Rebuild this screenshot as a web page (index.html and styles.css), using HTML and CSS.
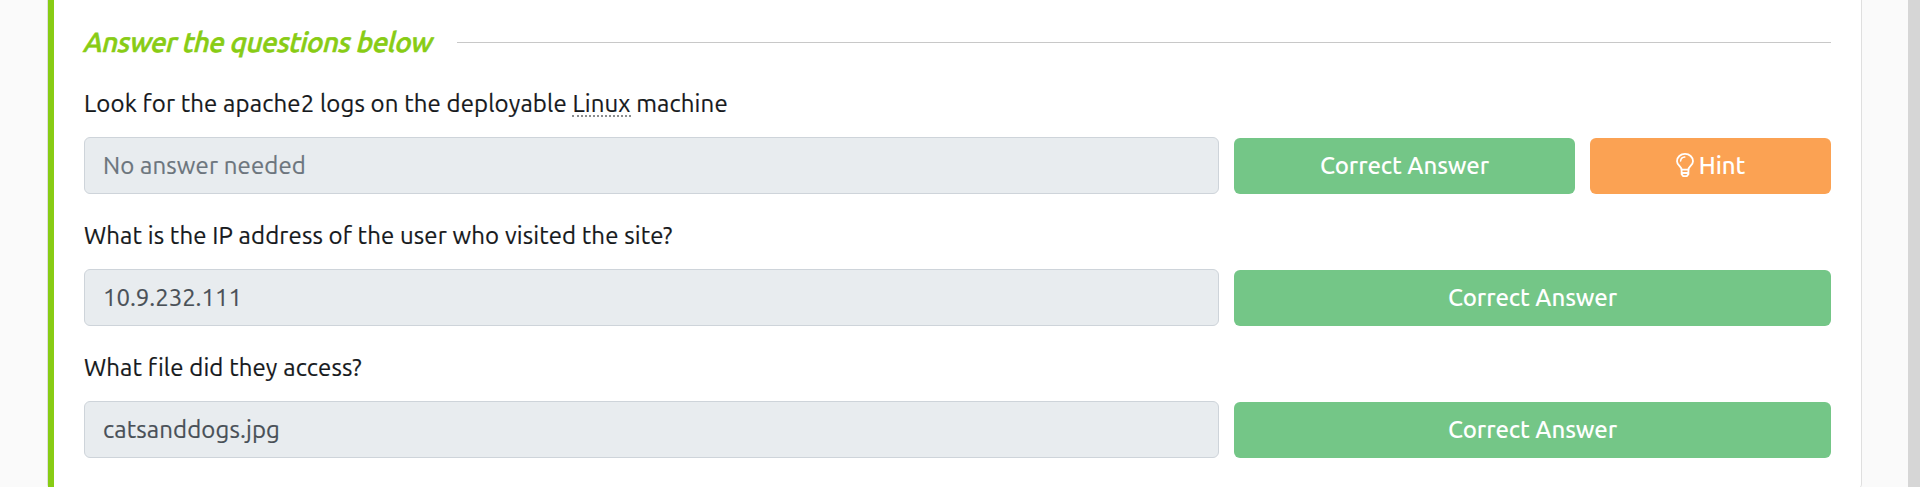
FILE: index.html
```html
<!DOCTYPE html>
<html lang="en">
<head>
<meta charset="utf-8">
<title>Task questions</title>
<link rel="stylesheet" href="styles.css">
</head>
<body>
<div class="page">
  <main class="card">
    <div class="card-body">
      <header class="heading">
        <h2 class="heading-text">Answer the questions below</h2>
        <span class="heading-line"></span>
      </header>
      <section class="question">
        <p class="prompt">Look for the apache2 logs on the deployable <abbr class="term">Linux</abbr> machine</p>
        <div class="row">
          <div class="answer empty">No answer needed</div>
          <div class="actions">
            <div class="btn correct">Correct Answer</div>
            <div class="btn hint">
              <svg class="bulb" viewBox="0 0 18 24" fill="none" stroke="#fff" stroke-width="1.8" stroke-linejoin="round" stroke-linecap="round">
                <path d="M5.6 16.7C5.4 13.2 1 12.4 1 8.2A8 7.3 0 0 1 17 8.2C17 12.4 12.6 13.2 12.4 16.7Z"/>
                <path d="M5.6 16.7V21.2L7.2 23.1H10.8L12.4 21.2V16.7M5.8 20H12.2"/>
                <path d="M4.6 8C4.8 5.6 6.4 4.3 8.8 4.1" stroke-width="1.5"/>
              </svg>
              <span>Hint</span>
            </div>
          </div>
        </div>
      </section>
      <section class="question">
        <p class="prompt">What is the IP address of the user who visited the site?</p>
        <div class="row">
          <div class="answer numeric">10.9.232.111</div>
          <div class="actions"><div class="btn correct">Correct Answer</div></div>
        </div>
      </section>
      <section class="question">
        <p class="prompt">What file did they access?</p>
        <div class="row">
          <div class="answer">catsanddogs.jpg</div>
          <div class="actions"><div class="btn correct">Correct Answer</div></div>
        </div>
      </section>
    </div>
  </main>
  <div class="scrollbar"></div>
</div>
</body>
</html>
```
FILE: styles.css
```css
* { box-sizing: border-box; }
body {
  margin: 0;
  background: #fafafa;
  color: #212529;
  font: 24px/36px Ubuntu, "Noto Sans", sans-serif;
  letter-spacing: 0.12px;
  overflow: hidden;
}
.page {
  display: flex;
  justify-content: space-between;
  height: 487px;
  padding-left: 47px;
  overflow: hidden;
}
.card {
  width: 1815px;
  height: 489px;
  border: 1px solid #dfdfdf;
  border-top: 0;
  border-radius: 0 0 5px 5px;
  background: #fff;
  display: flex;
}
.card-body {
  flex: 1;
  border-left: 6px solid #88cc14;
  padding: 24px 30px 0;
}
.scrollbar { width: 12px; background: #d6d6d6; }
.heading {
  display: flex;
  align-items: center;
  gap: 23px;
  height: 37px;
  margin-bottom: 24px;
}
.heading-text {
  margin: 0;
  width: 350px;
  color: #88cc14;
  font-size: 27.5px;
  font-weight: 500;
  letter-spacing: -0.3px;
  white-space: nowrap;
  -webkit-text-stroke: 0.7px #88cc14;
  transform: translate(1px, -1px) skewX(-14deg);
}
.heading-line { flex: 1; height: 1px; background: #c8c8c8; }
.question { height: 132px; }
.prompt { margin: 0 0 16px; padding-top: 1px; height: 36px; white-space: nowrap; color: #16191c; -webkit-text-stroke: 0.2px #16191c; }
.term { text-decoration: none; border-bottom: 2px dotted #8b8d8f; display: inline-block; line-height: 22px; }
.row { display: flex; align-items: center; gap: 15px; }
.answer {
  width: 1135px;
  height: 57px;
  padding: 0 18px;
  display: flex;
  align-items: center;
  border: 1px solid #ced4da;
  border-radius: 6px;
  background: #e8ecef;
  color: #495057;
  -webkit-text-stroke: 0.2px;
  white-space: nowrap;
}
.empty { color: #6c757d; }
.numeric { letter-spacing: -0.05px; }
.actions { flex: 1; display: flex; gap: 15px; padding-top: 1px; }
.btn {
  flex: 1;
  height: 56px;
  display: flex;
  align-items: center;
  justify-content: center;
  gap: 5px;
  border-radius: 6px;
  color: #fff;
  font-weight: 500;
  letter-spacing: -0.1px;
  white-space: nowrap;
}
.correct { background: #74c687; }
.hint { flex: 0 0 241px; background: #fba253; }
.bulb { width: 18px; height: 24px; margin-top: -2px; }
```
